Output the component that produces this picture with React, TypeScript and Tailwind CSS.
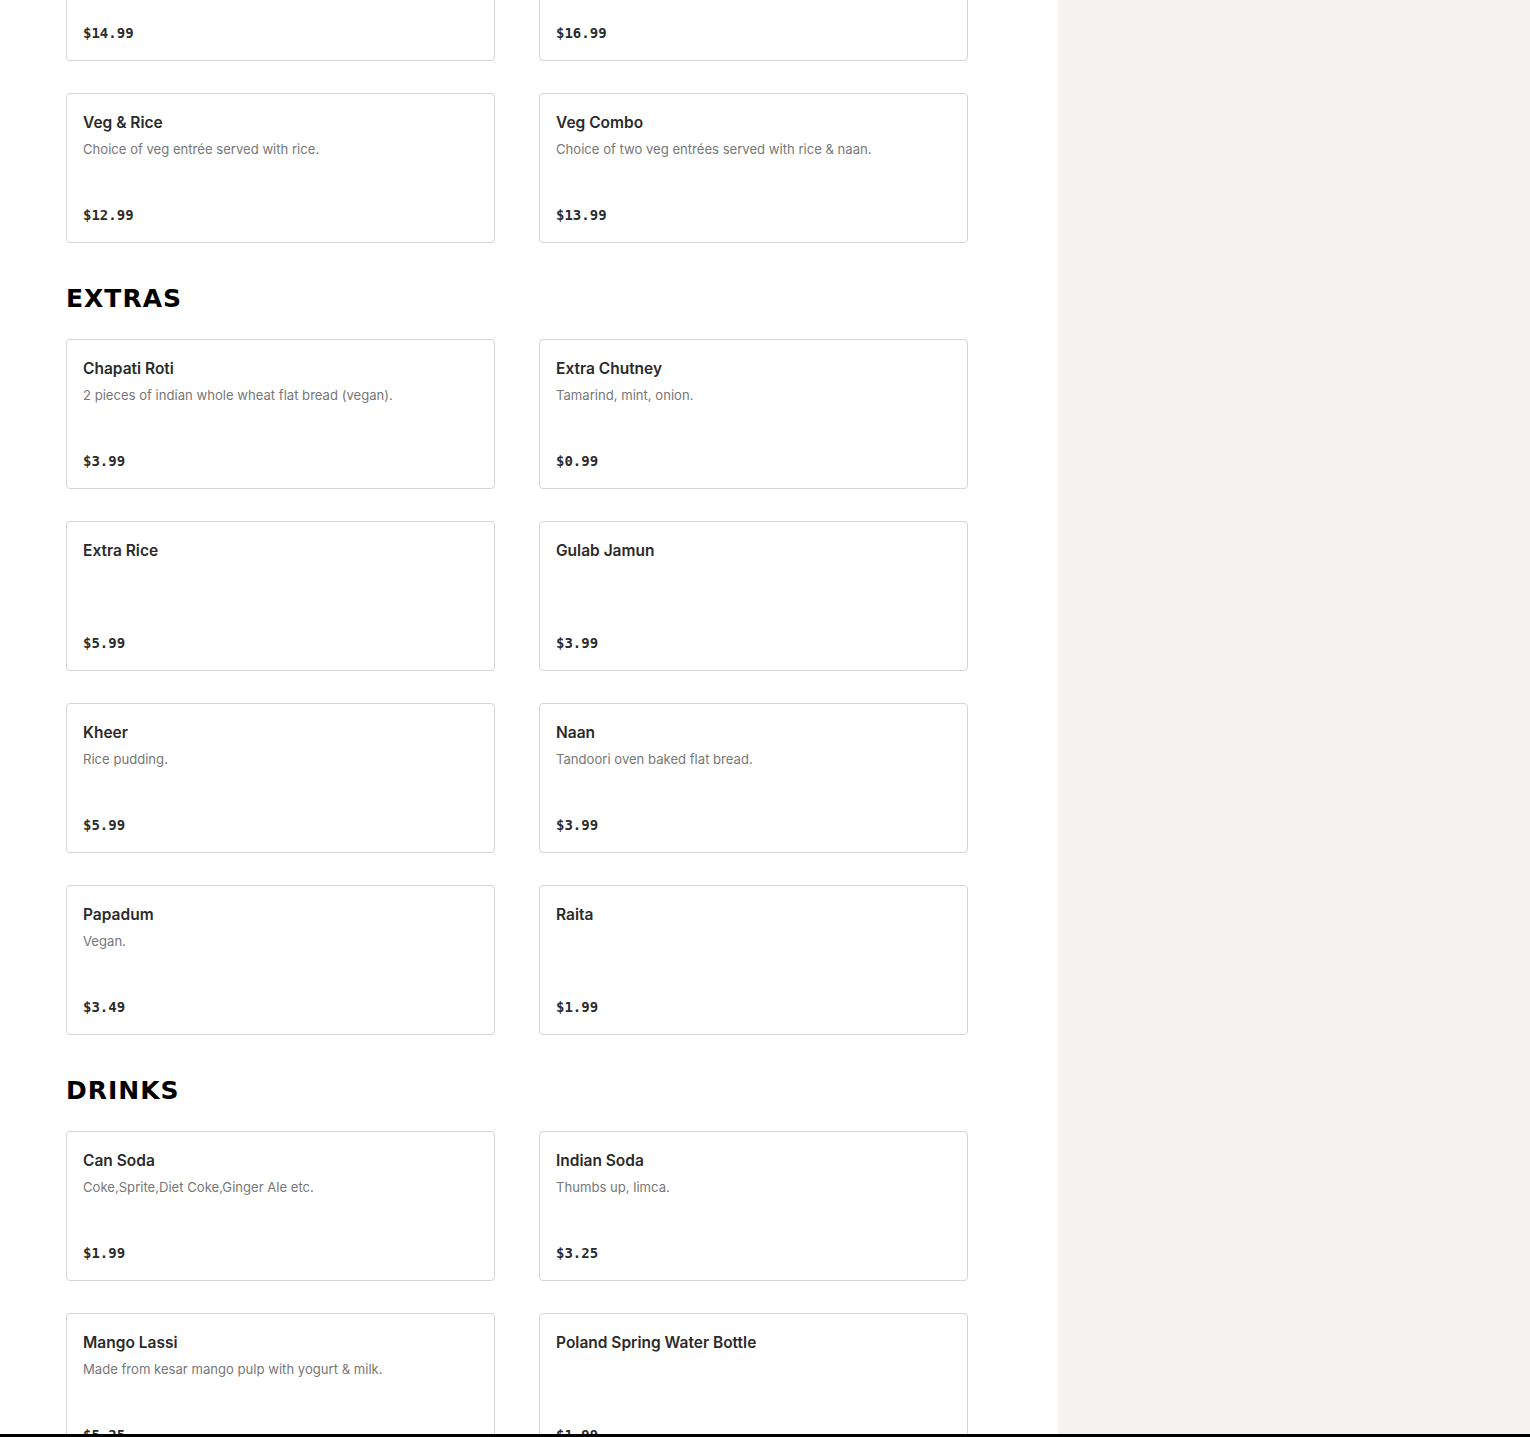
import React from 'react';

type Item = { name: string; desc?: string; price: string };

const combos: Item[] = [
  { name: 'Non-Veg & Rice', desc: 'Choice of non-veg entrée served with rice.', price: '$14.99' },
  { name: 'Non-Veg Combo', desc: 'Choice of two non-veg entrées served with rice & naan.', price: '$16.99' },
  { name: 'Veg & Rice', desc: 'Choice of veg entrée served with rice.', price: '$12.99' },
  { name: 'Veg Combo', desc: 'Choice of two veg entrées served with rice & naan.', price: '$13.99' },
];

const extras: Item[] = [
  { name: 'Chapati Roti', desc: '2 pieces of indian whole wheat flat bread (vegan).', price: '$3.99' },
  { name: 'Extra Chutney', desc: 'Tamarind, mint, onion.', price: '$0.99' },
  { name: 'Extra Rice', price: '$5.99' },
  { name: 'Gulab Jamun', price: '$3.99' },
  { name: 'Kheer', desc: 'Rice pudding.', price: '$5.99' },
  { name: 'Naan', desc: 'Tandoori oven baked flat bread.', price: '$3.99' },
  { name: 'Papadum', desc: 'Vegan.', price: '$3.49' },
  { name: 'Raita', price: '$1.99' },
];

const drinks: Item[] = [
  { name: 'Can Soda', desc: 'Coke,Sprite,Diet Coke,Ginger Ale etc.', price: '$1.99' },
  { name: 'Indian Soda', desc: 'Thumbs up, limca.', price: '$3.25' },
  { name: 'Mango Lassi', desc: 'Made from kesar mango pulp with yogurt & milk.', price: '$5.25' },
  { name: 'Poland Spring Water Bottle', price: '$1.99' },
];

const MenuCard: React.FC<{ item: Item }> = ({ item }) => (
  <div className="flex h-[150px] flex-col rounded-[4px] border border-[#d5d5d5] bg-white px-4 pt-[17px] pb-[17px]">
    <h3 className="font-['Inter',sans-serif] text-[15.5px] font-semibold leading-6 text-[#2b2b2b]">{item.name}</h3>
    {item.desc && (
      <p className="mt-[4px] font-['Inter',sans-serif] text-[13.1px] leading-5 text-[#777777]">{item.desc}</p>
    )}
    <p className="mt-auto font-['DejaVu_Sans_Mono',monospace] text-[14px] font-bold leading-5 text-[#2b2b2b]">
      {item.price}
    </p>
  </div>
);

const Grid: React.FC<{ items: Item[] }> = ({ items }) => (
  <div className="grid grid-cols-[429px_429px] gap-x-[44px] gap-y-8">
    {items.map((item) => (
      <MenuCard key={item.name} item={item} />
    ))}
  </div>
);

const Heading: React.FC<{ title: string }> = ({ title }) => (
  <h2 className="mt-10 mb-6 font-['DejaVu_Sans',sans-serif] text-[25px] font-bold leading-8 tracking-[1px] text-black">
    {title}
  </h2>
);

export default function App() {
  return (
    <div className="relative flex h-[1437px] w-full overflow-hidden bg-white">
      <main className="w-[1058px] shrink-0 px-[66px]">
        <div className="-mt-[89px]">
          <Grid items={combos} />
          <Heading title="EXTRAS" />
          <Grid items={extras} />
          <Heading title="DRINKS" />
          <Grid items={drinks} />
        </div>
      </main>
      <aside className="flex-1 bg-[#f4f3f0]" />
      <div className="absolute bottom-0 left-0 h-[3px] w-full bg-black" />
    </div>
  );
}
